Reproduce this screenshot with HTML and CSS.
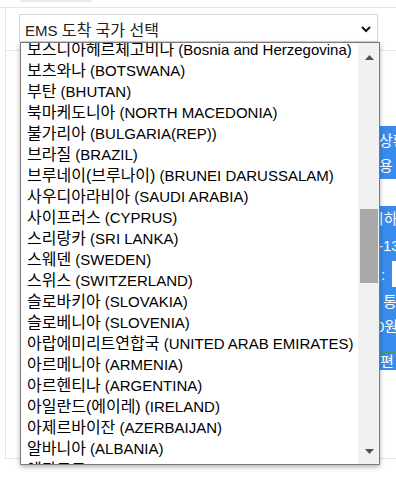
FILE: index.html
```html
<!DOCTYPE html>
<html lang="ko">
<head>
	<meta charset="UTF-8">
	<title>EMS 도착 국가 선택</title>
	<link rel="stylesheet" href="styles.css">
</head>
<body>

	<!-- Top strip -->
	<div class="top-strip">
		<div class="top-tab"></div>
	</div>

	<!-- Form panel -->
	<div class="panel">
		<div class="field">
			<div class="select-box">
				<span class="select-label">EMS <span class="ko">도착 국가 선택</span></span>
				<svg class="chevron" width="10" height="7" viewBox="0 0 10 7">
					<polyline points="1,1 5,5 9,1" fill="none" stroke="#111" stroke-width="2"/>
				</svg>
			</div>
		</div>

		<div class="panel-body">
			<div class="side">
				<div class="side-block block-a">
					<div class="side-line">상황</div>
					<div class="side-line">용</div>
				</div>
				<div class="side-block block-b">
					<div class="side-line line-1">시하</div>
					<div class="side-line line-2">-13</div>
					<div class="side-line line-3">:<span class="side-input"></span></div>
					<div class="side-line line-4"><span class="mark"></span>통</div>
					<div class="side-line line-5">0원</div>
					<div class="side-line line-6">편</div>
				</div>
			</div>
		</div>
	</div>

	<!-- Opened select list -->
	<div class="dropdown">
		<ul class="options" id="options"></ul>
		<div class="scrollbar">
			<div class="scroll-btn">
				<svg width="9" height="5" viewBox="0 0 9 5"><polygon points="0,5 4.5,0 9,5" fill="#505050"/></svg>
			</div>
			<div class="scroll-track">
				<div class="scroll-thumb"></div>
			</div>
			<div class="scroll-btn down">
				<svg width="9" height="5" viewBox="0 0 9 5"><polygon points="0,0 9,0 4.5,5" fill="#505050"/></svg>
			</div>
		</div>
	</div>

	<script>
		// Countries visible in the open list
		const countries = [
			"보스니아헤르체고비나 (Bosnia and Herzegovina)",
			"보츠와나 (BOTSWANA)",
			"부탄 (BHUTAN)",
			"북마케도니아 (NORTH MACEDONIA)",
			"불가리아 (BULGARIA(REP))",
			"브라질 (BRAZIL)",
			"브루네이(브루나이) (BRUNEI DARUSSALAM)",
			"사우디아라비아 (SAUDI ARABIA)",
			"사이프러스 (CYPRUS)",
			"스리랑카 (SRI LANKA)",
			"스웨덴 (SWEDEN)",
			"스위스 (SWITZERLAND)",
			"슬로바키아 (SLOVAKIA)",
			"슬로베니아 (SLOVENIA)",
			"아랍에미리트연합국 (UNITED ARAB EMIRATES)",
			"아르메니아 (ARMENIA)",
			"아르헨티나 (ARGENTINA)",
			"아일란드(에이레) (IRELAND)",
			"아제르바이잔 (AZERBAIJAN)",
			"알바니아 (ALBANIA)",
			"에콰도르 (ECUADOR)"
		];

		// Korean name and English name get their own spans
		const list = document.getElementById('options');
		countries.forEach(name => {
			const cut = name.lastIndexOf(' (');
			const li = document.createElement('li');

			const ko = document.createElement('span');
			ko.className = 'ko';
			ko.textContent = name.slice(0, cut);

			li.appendChild(ko);
			li.appendChild(document.createTextNode(name.slice(cut)));
			list.appendChild(li);
		});
	</script>
</body>
</html>
```

FILE: styles.css
```css
/* Global */
body {
	margin: 0;
	width: 396px;
	height: 478px;
	overflow: hidden;
	position: relative;
	background: #fff;
	font-family: "Liberation Sans", "Noto Sans CJK KR", sans-serif;
	color: #111;
}

.ko {
	font-size: 16px;
}

/* Top strip */
.top-strip {
	height: 7px;
	border-bottom: 1px solid #e3e3e3;
}

.top-tab {
	margin-left: 20px;
	width: 72px;
	height: 2px;
	background: #ebebeb;
}

/* Panel */
.panel {
	margin-left: 5px;
	border-left: 1px solid #e3e3e3;
	border-bottom: 1px solid #e3e3e3;
	height: 450px;
	display: flex;
	flex-direction: column;
}

.field {
	padding: 6px 0 8px 13px;
	border-bottom: 1px solid #e6e6e6;
}

.select-box {
	box-sizing: border-box;
	width: 359px;
	height: 28px;
	border: 1px solid #d6d6d6;
	background: #fff;
	display: flex;
	align-items: center;
	justify-content: space-between;
	padding: 0 6px 0 5px;
}

.select-label {
	font-size: 15px;
	color: #222;
	padding-top: 2px;
}

.chevron {
	margin-top: 2px;
}

.panel-body {
	flex: 1;
	display: flex;
	justify-content: flex-end;
}

/* Blue column peeking out from behind the list */
.side {
	width: 18px;
	padding-top: 75px;
	overflow: hidden;
	display: flex;
	flex-direction: column;
	gap: 27px;
}

.side-block {
	background: #3a8bee;
	color: #fff;
	font-size: 15px;
	white-space: nowrap;
}

.block-a {
	height: 53px;
	padding-top: 2px;
	box-sizing: border-box;
}

.block-a .side-line {
	height: 25px;
	line-height: 25px;
	padding-left: 1px;
}

.block-b {
	height: 164px;
}

.block-b .side-line {
	line-height: 25px;
	height: 25px;
}

.line-1 { margin-left: -8px; }
.line-2 { height: 28px !important; line-height: 30px !important; }

.line-3 {
	height: 30px !important;
	display: flex;
	align-items: center;
	padding-left: 3px;
	gap: 7px;
}

.side-input {
	width: 20px;
	height: 26px;
	background: #fff;
}

.line-4 {
	display: flex;
	align-items: center;
	gap: 3px;
	padding-left: 2px;
}

.mark {
	width: 2px;
	height: 16px;
	background: #9d6fc4;
}

.line-5 { margin-left: -2px; }

.line-6 {
	margin-top: 13px;
	border-top: 1px solid #3f9a6a;
	height: 17px !important;
	line-height: 17px !important;
	padding-left: 2px;
}

/* Opened dropdown */
.dropdown {
	position: absolute;
	left: 20px;
	top: 42px;
	width: 360px;
	height: 423px;
	box-sizing: border-box;
	border: 1px solid #7a7a7a;
	background: #fff;
	box-shadow: 0 2px 5px rgba(0, 0, 0, 0.3);
	display: flex;
	z-index: 10;
}

.options {
	flex: 1;
	margin: 0;
	padding: 0;
	list-style: none;
	overflow: hidden;
}

.options li {
	height: 21px;
	line-height: 21px;
	font-size: 15px;
	padding-left: 6px;
	color: #000;
	white-space: nowrap;
}

.options li:first-child {
	margin-top: -4px;
}

.scrollbar {
	width: 21px;
	background: #f1f1f1;
	display: flex;
	flex-direction: column;
}

.scroll-btn {
	height: 17px;
	display: flex;
	align-items: flex-end;
	justify-content: center;
	padding-left: 1px;
}

.scroll-btn.down {
	align-items: flex-start;
	padding-top: 2px;
	height: 15px;
}

.scroll-track {
	flex: 1;
}

.scroll-thumb {
	margin: 149px 1px 0 2px;
	height: 74px;
	background: #a8a8a8;
}
```
